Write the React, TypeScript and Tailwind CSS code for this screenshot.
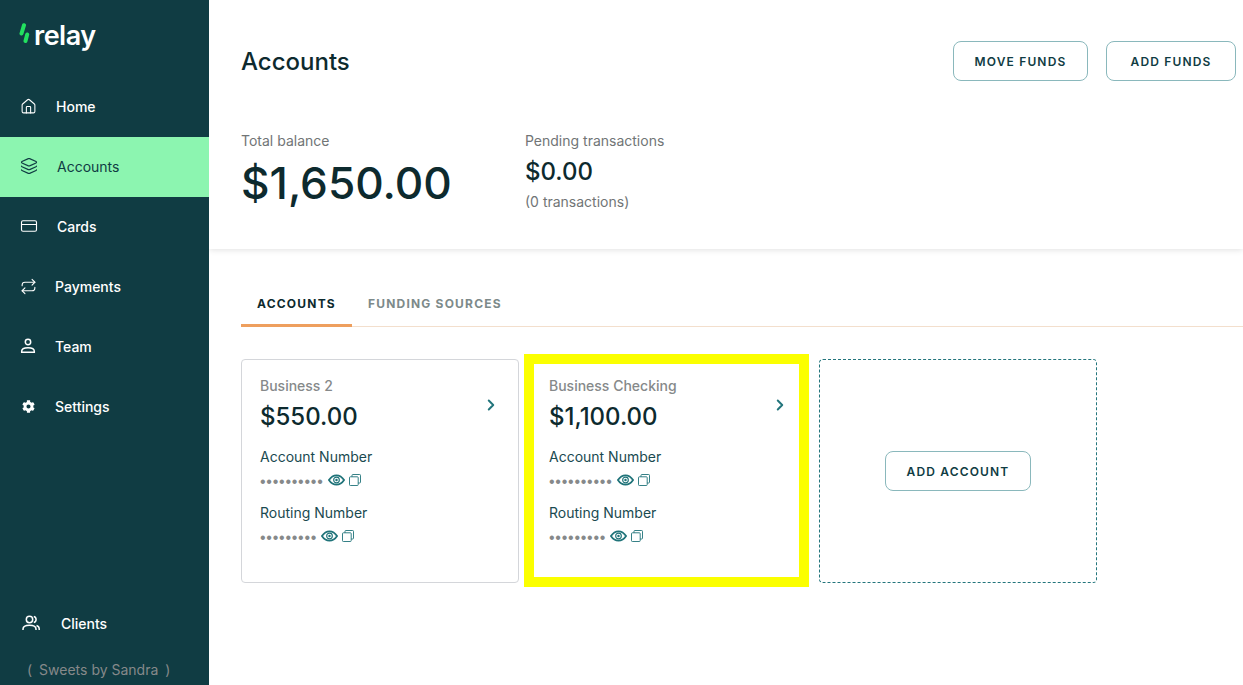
import { ChevronRight, Home, Layers, CreditCard, Repeat } from 'lucide-react'
import { FaCog } from 'react-icons/fa'

function PersonIcon() {
    return (
        <svg width="16" height="16" viewBox="0 0 16 16" fill="none" stroke="currentColor" strokeWidth="1.500" className="shrink-0">
            <circle cx="8" cy="4" r="2.700" />
            <path d="M1.700 14.300h12.600v-1c0-2.200-2.800-3.500-6.300-3.500s-6.300 1.300-6.300 3.500v1Z" />
        </svg>
    )
}

function GearIcon() {
    return <FaCog size={13} className="shrink-0 mx-[2px]" />
}

function ClientsIcon() {
    return (
        <svg width="18" height="16" viewBox="0 0 18 16" fill="none" stroke="currentColor" strokeWidth="1.500" className="shrink-0">
            <circle cx="7.500" cy="4.500" r="3.200" />
            <path d="M1 15v-1c0-2.400 2.600-3.800 6.500-3.800s6.500 1.400 6.500 3.800v1" />
            <path d="M11.800 1.500c1.400.4 2.300 1.600 2.300 3s-.9 2.600-2.300 3" />
            <path d="M14.500 10.500c1.600.6 2.700 1.800 2.700 3.300V15" />
        </svg>
    )
}

const navItems = [
    { label: 'Home', icon: <Home size={17} strokeWidth={1.5} className="shrink-0" />, gap: 'gap-[19px]' },
    { label: 'Accounts', icon: <Layers size={18} strokeWidth={1.5} className="shrink-0" />, gap: 'gap-[19px]', active: true },
    { label: 'Cards', icon: <CreditCard size={18} strokeWidth={1.5} className="shrink-0" />, gap: 'gap-[19px]' },
    { label: 'Payments', icon: <Repeat size={17} strokeWidth={1.5} className="shrink-0" />, gap: 'gap-[18px]' },
    { label: 'Team', icon: <PersonIcon />, gap: 'gap-[19px]' },
    { label: 'Settings', icon: <GearIcon />, gap: 'gap-[18px]' },
]

function EyeIcon() {
    return (
        <svg width="17" height="12" viewBox="0 0 18 12" fill="none" stroke="#1f7379" className="shrink-0">
            <path d="M1 6C3.200 2.600 5.900 1 9 1s5.800 1.600 8 5c-2.200 3.400-4.900 5-8 5S3.200 9.400 1 6Z" strokeWidth="1.900" />
            <circle cx="9" cy="6" r="3" strokeWidth="1.200" />
            <circle cx="9" cy="6" r="1.300" fill="#1f7379" stroke="none" />
        </svg>
    )
}

function CopyIcon() {
    return (
        <svg width="12" height="12" viewBox="0 0 12 12" fill="none" stroke="#1f7379" strokeWidth="0.9" className="shrink-0">
            <rect x="0.5" y="2.800" width="8.700" height="8.700" rx="0.8" />
            <path d="M3 2.800V1.300c0-.5.3-.8.8-.8h6.900c.5 0 .8.300.8.800v6.900c0 .5-.3.800-.8.800H9.200" />
        </svg>
    )
}

function SecretRow({ label, dots }: { label: string; dots: string }) {
    return (
        <div>
            <div className="text-[14px] leading-[20px] text-[#1a4a50]">{label}</div>
            <div className="flex items-center h-[16px] mt-[6px]">
                <span className="font-['Liberation_Sans'] text-[16px] tracking-[0.75px] text-[#86898a] leading-[16px] translate-y-[1px]">{dots}</span>
                <span className="ml-[4px] flex items-center gap-[4px] -translate-y-[1px]">
                    <EyeIcon />
                    <CopyIcon />
                </span>
            </div>
        </div>
    )
}

function AccountCard({ name, amount, highlighted }: { name: string; amount: string; highlighted?: boolean }) {
    return (
        <div className="relative w-[278px] h-[224px] rounded border border-[#d4d6da] bg-white pl-[18px] pr-[18px] pt-[16px]">
            <div className="text-[14px] leading-[20px] font-medium text-[#86898a]">{name}</div>
            <div className="flex items-center justify-between mt-[5px]">
                <div className="text-[24px] leading-[32px] font-medium text-[#0d2a2e]">{amount}</div>
                <ChevronRight size={18} strokeWidth={2.6} className="text-[#23757c] -translate-y-[12px]" />
            </div>
            <div className="mt-[14px] flex flex-col gap-[14px]">
                <SecretRow label="Account Number" dots="••••••••••" />
                <SecretRow label="Routing Number" dots="•••••••••" />
            </div>
            {highlighted && (
                <div className="absolute left-[-7px] right-[-2px] top-[-6px] bottom-[-5px] border-[10px] border-[#fbff00]" />
            )}
        </div>
    )
}

export default function App() {
    return (
        <div className="flex h-[685px] w-[1243px] overflow-hidden bg-white font-['Inter',sans-serif]">
            {/* Sidebar */}
            <aside className="relative z-10 w-[209px] shrink-0 bg-[#103c43] flex flex-col">
                <div className="h-[77px] pl-[19px] pt-[20px] flex items-start">
                    <svg width="11" height="20" viewBox="0 0 11 20" className="mt-[3px]">
                        <path d="M5 2.200 2.500 10.500" stroke="#22e05f" strokeWidth="4" strokeLinecap="round" />
                        <path d="M8.200 11.500 6.500 18" stroke="#22e05f" strokeWidth="4" strokeLinecap="round" />
                    </svg>
                    <span className="ml-[4px] text-[27px] leading-[32px] font-semibold tracking-[-0.5px] text-white">relay</span>
                </div>
                <nav>
                    {navItems.map(item => (
                        <div
                            key={item.label}
                            className={`h-[60px] pb-[2px] pl-[20px] flex items-center text-[14px] ${item.gap} ${item.active ? 'bg-[#8cf5b0] text-[#103c43]' : 'text-white font-medium'}`}
                        >
                            {item.icon}
                            <span>{item.label}</span>
                        </div>
                    ))}
                </nav>
                <div className="mt-auto">
                    <div className="h-[60px] mb-[6px] pl-[22px] flex items-center gap-[21px] text-[14px] font-medium text-white">
                        <ClientsIcon />
                        <span>Clients</span>
                    </div>
                    <div className="h-[26px] pl-[27px] flex items-start text-[14px] text-[#86898a]">
                        <span>(</span>
                        <span className="ml-[7px]">Sweets by Sandra</span>
                        <span className="ml-[7px]">)</span>
                    </div>
                </div>
            </aside>

            {/* Main */}
            <main className="flex-1 min-w-0">
                <header className="h-[249px] pl-[32px] pr-[7px] pt-[41px] shadow-[0_1px_6px_rgba(0,0,0,0.12)]">
                    <div className="flex items-center justify-between">
                        <h1 className="text-[24px] font-medium text-[#0d2a2e] translate-y-[1px]">Accounts</h1>
                        <div className="flex gap-[18px]">
                            <button className="w-[135px] h-[40px] pt-[2px] rounded-lg border border-[#8ab8bc] text-[12px] font-semibold tracking-[1.15px] text-[#103c43]">MOVE FUNDS</button>
                            <button className="w-[130px] h-[40px] pt-[2px] rounded-lg border border-[#8ab8bc] text-[12px] font-semibold tracking-[1.15px] text-[#103c43]">ADD FUNDS</button>
                        </div>
                    </div>
                    <div className="flex mt-[50px]">
                        <div className="w-[284px]">
                            <div className="text-[14px] leading-[20px] text-[#717576]">Total balance</div>
                            <div className="text-[44.2px] leading-[56px] mt-[4px] font-medium text-[#0d2a2e]">$1,650.00</div>
                        </div>
                        <div>
                            <div className="text-[14px] leading-[20px] text-[#717576]">Pending transactions</div>
                            <div className="text-[24px] leading-[32px] mt-[5px] font-medium text-[#0d2a2e]">$0.00</div>
                            <div className="text-[14px] leading-[20px] mt-[4px] text-[#717576]">(0 transactions)</div>
                        </div>
                    </div>
                </header>

                <div className="pl-[32px]">
                    <div className="mt-[34px] flex h-[44px] border-b border-[#f3dfcd] text-[12px] font-bold tracking-[1.2px]">
                        <div className="w-[111px] h-[44px] border-b-[3px] border-[#ee9f5e] text-center leading-[42px] text-[#0d2a2e]">ACCOUNTS</div>
                        <div className="ml-[16px] leading-[42px] text-[#7d8a8a]">FUNDING SOURCES</div>
                    </div>
                    <div className="mt-[32px] flex gap-[11px]">
                        <AccountCard name="Business 2" amount="$550.00" />
                        <AccountCard name="Business Checking" amount="$1,100.00" highlighted />
                        <div className="w-[278px] h-[224px] rounded border border-dashed border-[#23757c] flex items-center justify-center">
                            <button className="w-[146px] h-[40px] pt-[2px] rounded-lg border border-[#8ab8bc] text-[12px] font-semibold tracking-[1.15px] text-[#103c43]">ADD ACCOUNT</button>
                        </div>
                    </div>
                </div>
            </main>
        </div>
    )
}
